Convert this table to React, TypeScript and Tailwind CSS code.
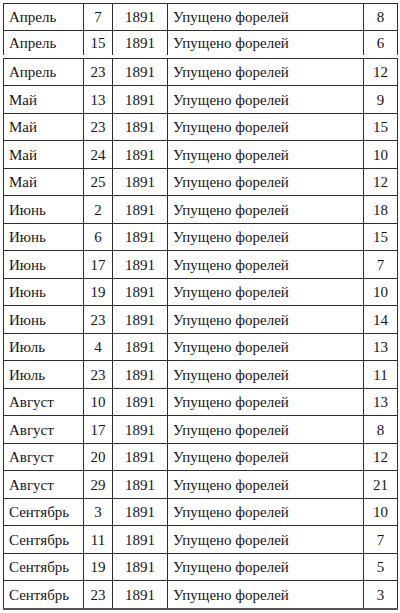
const top = [
  ['Апрель', '7', '1891', 'Упущено форелей', '8'],
  ['Апрель', '15', '1891', 'Упущено форелей', '6'],
];

const rest = [
  ['Апрель', '23', '12'],
  ['Май', '13', '9'],
  ['Май', '23', '15'],
  ['Май', '24', '10'],
  ['Май', '25', '12'],
  ['Июнь', '2', '18'],
  ['Июнь', '6', '15'],
  ['Июнь', '17', '7'],
  ['Июнь', '19', '10'],
  ['Июнь', '23', '14'],
  ['Июль', '4', '13'],
  ['Июль', '23', '11'],
  ['Август', '10', '13'],
  ['Август', '17', '8'],
  ['Август', '20', '12'],
  ['Август', '29', '21'],
  ['Сентябрь', '3', '10'],
  ['Сентябрь', '11', '7'],
  ['Сентябрь', '19', '5'],
  ['Сентябрь', '23', '3'],
];

function Row({ cells, h, last }: { cells: string[]; h: string; last?: boolean }) {
  return (
    <div className={`grid grid-cols-[80px_29px_55px_196px_35px] border-t border-[#2f2f2f] ${h} ${last ? 'border-b-2 border-b-[#555]' : ''}`}>
      <div className="flex items-center border-l border-[#2f2f2f] pl-[5px] pt-[1px]">{cells[0]}</div>
      <div className="flex items-center justify-center border-l border-[#2f2f2f] pt-[1px]">{cells[1]}</div>
      <div className="flex items-center justify-center border-l border-[#2f2f2f] pt-[1px]">{cells[2]}</div>
      <div className="flex items-center border-l border-[#2f2f2f] pl-[5px] pt-[1px]">{cells[3]}</div>
      <div className="flex items-center justify-center border-x border-[#2f2f2f] pt-[1px]">{cells[4]}</div>
    </div>
  );
}

export default function App() {
  return (
    <div
      className="w-[400px] h-[613px] bg-white pt-[3px] pl-[3px] text-[15px] leading-none text-[#161616]"
      style={{ fontFamily: '"Liberation Serif", "DejaVu Serif", serif' }}
    >
      {/* first piece of the scan, without bottom rule */}
      <div className="w-[395px]">
        <Row cells={top[0]} h="h-[27px]" />
        <Row cells={top[1]} h="h-[25px]" />
      </div>

      <div className="w-[395px] mt-[3px]">
        {rest.map((r, i) => (
          <Row
            key={i}
            cells={[r[0], r[1], '1891', 'Упущено форелей', r[2]]}
            h={i === rest.length - 1 ? 'h-[30px]' : i % 2 === 0 ? 'h-[27px]' : 'h-[28px]'}
            last={i === rest.length - 1}
          />
        ))}
      </div>
    </div>
  );
}
